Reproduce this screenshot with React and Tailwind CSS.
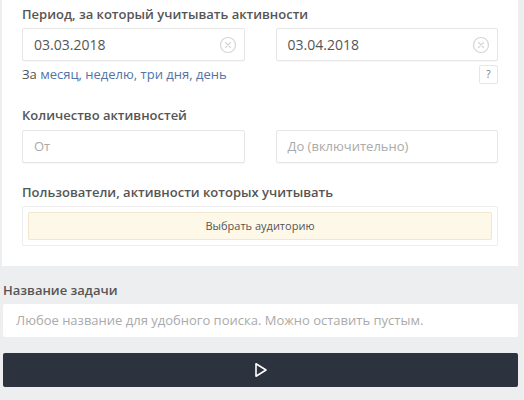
import React from "react";

function ClearIcon() {
  return (
    <svg width="18" height="18" viewBox="0 0 18 18" className="shrink-0">
      <circle cx="9" cy="9" r="7.5" fill="none" stroke="#d6d6d6" strokeWidth="1.2" />
      <path d="M6.5 6.5 L11.5 11.5 M11.5 6.5 L6.5 11.5" stroke="#d6d6d6" strokeWidth="1.2" strokeLinecap="round" />
    </svg>
  );
}

function DateInput({ value }) {
  return (
    <div className="flex h-[33px] flex-1 items-center justify-between rounded-[2px] border border-[#e6e6e6] bg-white pl-[11px] pr-[7px] shadow-[0_1px_1px_rgba(0,0,0,0.03)]">
      <span className="text-[14px] text-[#555]">{value}</span>
      <ClearIcon />
    </div>
  );
}

function TextInput({ placeholder }) {
  return (
    <div className="flex h-[33px] flex-1 items-center rounded-[2px] border border-[#e6e6e6] bg-white pl-[11px] shadow-[0_1px_1px_rgba(0,0,0,0.03)]">
      <span className="text-[13px] text-[#aaa]">{placeholder}</span>
    </div>
  );
}

export default function App() {
  return (
    <div
      className="h-[400px] w-[524px] overflow-hidden bg-[#eceef0]"
      style={{ fontFamily: '"Open Sans", "Noto Sans", sans-serif' }}
    >
      <div className="ml-[2px] mr-[6px] bg-white px-[20px] pb-[20px] pt-[5px]">
        <div className="text-[13px] font-semibold leading-[18px] text-[#555]">
          Период, за который учитывать активности
        </div>
        <div className="mt-[5px] flex gap-[31px]">
          <DateInput value="03.03.2018" />
          <DateInput value="03.04.2018" />
        </div>
        <div className="mt-[4px] flex items-start justify-between">
          <div className="text-[13px] leading-[18px]">
            <span className="text-[#555]">За </span>
            <span className="text-[#5274a6]">месяц, неделю, три дня, день</span>
          </div>
          <div className="flex h-[19px] w-[19px] items-center justify-center rounded-[2px] border border-[#e6e6e6] text-[10px] text-[#777]">
            ?
          </div>
        </div>
        <div className="mt-[22px] text-[13px] font-semibold leading-[18px] text-[#555]">
          Количество активностей
        </div>
        <div className="mt-[6px] flex gap-[31px]">
          <TextInput placeholder="От" />
          <TextInput placeholder="До (включительно)" />
        </div>
        <div className="mt-[20px] text-[13px] font-semibold leading-[18px] text-[#555]">
          Пользователи, активности которых учитывать
        </div>
        <div className="mt-[5px] rounded-[2px] border border-[#eeeeee] p-[5px]">
          <div className="flex h-[28px] items-center justify-center rounded-[2px] border border-[#efe8cf] bg-[#fdf8e8] text-[11px] text-[#555]">
            Выбрать аудиторию
          </div>
        </div>
      </div>
      <div className="ml-[3px] mr-[6px]">
        <div className="mt-[15px] text-[13px] font-semibold leading-[18px] text-[#555]">
          Название задачи
        </div>
        <div className="mt-[5px] flex h-[33px] items-center rounded-[2px] bg-white pl-[13px]">
          <span className="text-[13px] text-[#aaa]">
            Любое название для удобного поиска. Можно оставить пустым.
          </span>
        </div>
        <div className="mt-[16px] flex h-[34px] items-center justify-center rounded-[2px] bg-[#2c323e]">
          <svg width="14" height="16" viewBox="0 0 14 16">
            <path d="M2 1.8 L12 8 L2 14.2 Z" fill="none" stroke="#fff" strokeWidth="1.6" strokeLinejoin="round" />
          </svg>
        </div>
      </div>
    </div>
  );
}
